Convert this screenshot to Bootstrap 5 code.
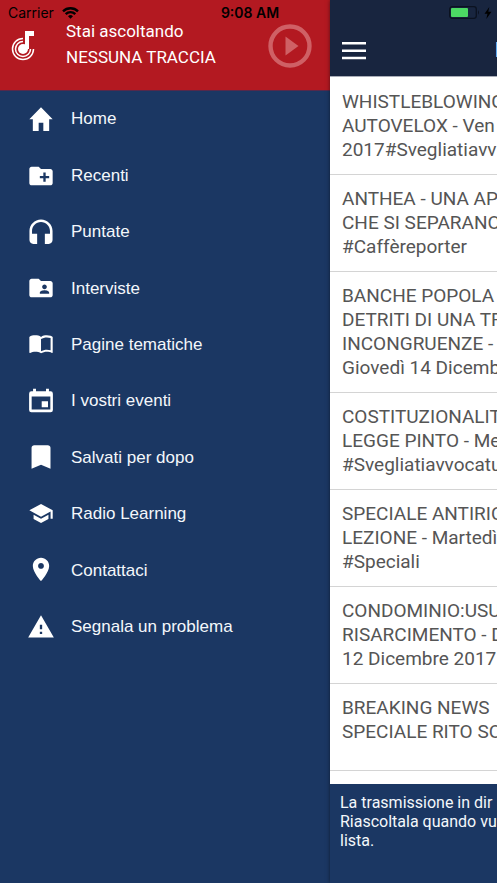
<!DOCTYPE html>
<html lang="it">
<head>
<meta charset="utf-8">
<meta name="viewport" content="width=device-width, initial-scale=1">
<title>Radio</title>
<link href="https://cdn.jsdelivr.net/npm/bootstrap@5.3.0/dist/css/bootstrap.min.css" rel="stylesheet">
<style>
body { font-family: Roboto, "Liberation Sans", sans-serif; background: #1b3763; }
.drawer { width: 330px; background: #1b3763; }
.now-playing { background: #b31921; height: 91px; padding: 18px 18px 0 11px; font-size: 17px; line-height: 26px; border-bottom: 1px solid #54294c; }
.track { margin-left: 30px; }
.brand-mark { margin-top: 11px; }
.play-btn { margin-top: 6px; color: #cf6065; }
.menu-list { height: 564px; font-family: "Liberation Sans", sans-serif; font-size: 17px; }
.menu-list a { padding-left: 27px; gap: 16px; color: #f4f7fb; }
.content-pane { min-width: 0; box-shadow: 0 0 4px rgba(0, 0, 0, .5); z-index: 1; }
.top-bar { background: #18253f; height: 77px; margin-bottom: 1px; padding: 38px 0 0 12px; gap: 129px; border-bottom: 1px solid #a9adb8; }
.top-title { font-size: 20px; line-height: 24px; font-weight: 500; }
.episodes a { padding: 12px; font-size: 19px; line-height: 24px; color: #555; border-bottom: 1px solid #d4d4d4; }
.episodes a.brief { min-height: 87px; }
.live-note { background: #1b3763; height: 99px; padding: 9px 10px; font-size: 16px; line-height: 19px; color: #f4f7fb; }
.status-bar { height: 25px; z-index: 2; padding: 0 5px 0 8px; font: 14px/25px Inter, "Liberation Sans", sans-serif; color: #000; }
.status-left, .status-right { flex: 1 1 0; }
</style>
</head>
<body>
<div class="d-flex min-vh-100 position-relative overflow-hidden">
  <div class="status-bar position-absolute top-0 start-0 w-100 d-flex align-items-center">
    <div class="status-left d-flex align-items-center gap-2"><span>Carrier</span>
      <svg width="17" height="12" viewBox="0 0 17 12" fill="none" stroke="#000" stroke-width="2.4" aria-hidden="true"><path d="M1 4.3a10.7 10.7 0 0 1 15 0M3.7 7.1a6.8 6.8 0 0 1 9.6 0"/><path d="M8.5 11.8 6 9.3a3.6 3.6 0 0 1 5 0z" fill="#000" stroke="none"/></svg>
    </div>
    <div class="fw-semibold">9:08 AM</div>
    <div class="status-right d-flex align-items-center justify-content-end gap-1">
      <svg width="31" height="13" viewBox="0 0 31 13" aria-hidden="true"><rect x=".7" y=".7" width="26.6" height="11.6" rx="2.5" fill="none" stroke="#0b1220" stroke-width="1.3"/><path d="M29 4.3q2 2.200 0 4.400z" fill="#0b1220"/><rect x="2" y="2" width="17" height="9" rx="1" fill="#4cd964"/></svg>
      <svg width="8" height="12" viewBox="0 0 8 12" aria-hidden="true"><path d="M5.300 0 .5 6.700h3L2.300 12l5.200-7.200H4.300z"/></svg>
    </div>
  </div>

  <aside class="drawer flex-shrink-0">
    <div class="now-playing d-flex align-items-start text-white">
      <svg class="brand-mark flex-shrink-0" width="25" height="33" viewBox="0 0 25 33" fill="none" stroke="#fff" stroke-width="1.500" aria-hidden="true"><circle cx="12" cy="20" r="5" fill="#fff" stroke="none"/><path d="M14 2h9v5h-5v13h-4z" fill="#fff" stroke="none"/><path d="M12 12.500a7.500 7.500 0 1 0 7.500 7.500M12 9.500A10.500 10.500 0 1 0 22.500 20"/></svg>
      <div class="track flex-grow-1"><div>Stai ascoltando</div><div>NESSUNA TRACCIA</div></div>
      <button type="button" class="play-btn btn p-0 border-0 lh-1" aria-label="Riproduci"><svg class="d-block" width="44" height="44" viewBox="0 0 44 44"><circle cx="22" cy="22" r="19.500" fill="none" stroke="currentColor" stroke-width="4.400"/><path d="M17.500 12.500v19l13-9.500z" fill="currentColor"/></svg></button>
    </div>
    <nav class="menu-list d-flex flex-column" aria-label="Menu">
      <a href="#" class="flex-fill d-flex align-items-center text-decoration-none"><svg width="28" height="28" viewBox="0 0 24 24" fill="#fff"><path d="M10 22.200v-7h4v7h5v-10h3L12 2 2 12.200h3v10z"/></svg>Home</a>
      <a href="#" class="flex-fill d-flex align-items-center text-decoration-none"><svg width="28" height="28" viewBox="0 0 24 24" fill="#fff"><path d="M20 6h-8l-2-2H4c-1.110 0-1.990.890-1.990 2L2 18c0 1.110.890 2 2 2h16c1.110 0 2-.890 2-2V8c0-1.110-.890-2-2-2zm-1 8h-3v3h-2v-3h-3v-2h3V9h2v3h3v2z"/></svg>Recenti</a>
      <a href="#" class="flex-fill d-flex align-items-center text-decoration-none"><svg width="28" height="28" viewBox="0 0 24 24" fill="#fff"><path d="M12 1c-4.970 0-9 4.030-9 9v7c0 1.660 1.340 3 3 3h3v-8H5v-2c0-3.870 3.130-7 7-7s7 3.130 7 7v2h-4v8h3c1.660 0 3-1.340 3-3v-7c0-4.970-4.030-9-9-9z" transform="translate(-1.200 0.200) scale(1.100)"/></svg>Puntate</a>
      <a href="#" class="flex-fill d-flex align-items-center text-decoration-none"><svg width="28" height="28" viewBox="0 0 24 24" fill="#fff"><path d="M20 6h-8l-2-2H4c-1.100 0-1.990.900-1.990 2L2 18c0 1.100.900 2 2 2h16c1.100 0 2-.900 2-2V8c0-1.100-.900-2-2-2zm-5 3c1.100 0 2 .900 2 2s-.900 2-2 2-2-.900-2-2 .900-2 2-2zm4 8h-8v-1c0-1.330 2.670-2 4-2s4 .670 4 2v1z"/></svg>Interviste</a>
      <a href="#" class="flex-fill d-flex align-items-center text-decoration-none"><svg width="28" height="28" viewBox="0 0 24 24" fill="#fff"><path d="M21 5c-1.110-.350-2.330-.500-3.500-.500-1.950 0-4.050.400-5.500 1.500-1.450-1.100-3.550-1.500-5.500-1.500S2.450 4.900 1 6v14.650c0 .250.250.500.500.500.100 0 .150-.050.250-.050C3.100 20.450 5.050 20 6.500 20c1.950 0 4.050.400 5.500 1.500 1.350-.850 3.800-1.500 5.500-1.500 1.650 0 3.350.300 4.750 1.050.100.050.150.050.250.050.250 0 .500-.250.500-.500V6c-.600-.450-1.250-.750-2-1zm0 13.500c-1.100-.350-2.300-.500-3.500-.500-1.700 0-4.150.650-5.500 1.500V8c1.350-.850 3.800-1.500 5.500-1.500 1.200 0 2.400.150 3.500.500v11.500z" transform="translate(1.100 -.4) scale(.91)"/></svg>Pagine tematiche</a>
      <a href="#" class="flex-fill d-flex align-items-center text-decoration-none"><svg width="28" height="28" viewBox="0 0 24 24" fill="#fff"><path fill-rule="evenodd" d="M5.200 1.400h2.500v2.300h8.600V1.400h2.500v2.300h1.400a2 2 0 0 1 2 2v14a2 2 0 0 1-2 2H3.800a2 2 0 0 1-2-2v-14a2 2 0 0 1 2-2h1.400zM4 8.200v11.100h16V8.200zM12.600 12.300H18v5.100h-5.400z"/></svg>I vostri eventi</a>
      <a href="#" class="flex-fill d-flex align-items-center text-decoration-none"><svg width="28" height="28" viewBox="0 0 24 24" fill="#fff"><path d="M17 3H7c-1.100 0-1.990.900-1.990 2L5 21l7-3 7 3V5c0-1.100-.900-2-2-2z" transform="translate(-1.900 -2.300) scale(1.160 1.120)"/></svg>Salvati per dopo</a>
      <a href="#" class="flex-fill d-flex align-items-center text-decoration-none"><svg width="28" height="28" viewBox="0 0 24 24" fill="#fff"><path d="M5 13.180v4L12 21l7-3.820v-4L12 17l-7-3.820zM12 3 1 9l11 6 9-4.910V17h2V9L12 3z" transform="translate(1.100 .6) scale(.91)"/></svg>Radio Learning</a>
      <a href="#" class="flex-fill d-flex align-items-center text-decoration-none"><svg width="28" height="28" viewBox="0 0 24 24" fill="#fff"><path d="M12 1.500c-3.870 0-7 3.130-7 7 0 5.250 7 13 7 13s7-7.750 7-13c0-3.870-3.130-7-7-7zm0 9.500c-1.380 0-2.500-1.120-2.500-2.500s1.120-2.500 2.500-2.500 2.500 1.120 2.500 2.500-1.120 2.500-2.500 2.500z"/></svg>Contattaci</a>
      <a href="#" class="flex-fill d-flex align-items-center text-decoration-none"><svg width="28" height="28" viewBox="0 0 24 24" fill="#fff"><path d="M1 21h22L12 2 1 21zm12-3h-2v-2h2v2zm0-4h-2v-4h2v4z"/></svg>Segnala un problema</a>
    </nav>
  </aside>

  <main class="content-pane flex-fill d-flex flex-column overflow-hidden bg-white text-nowrap">
    <header class="top-bar d-flex align-items-start text-white flex-shrink-0">
      <button type="button" class="btn p-0 border-0 lh-1 text-white" aria-label="Apri menu"><svg class="d-block" width="24" height="24" viewBox="0 0 24 24"><path d="M0 4h24v2.500H0zM0 11.500h24V14H0zM0 18.700h24v2.500H0z" fill="currentColor"/></svg></button>
      <div class="top-title">Radio</div>
    </header>
    <div class="episodes flex-grow-1 d-flex flex-column">
      <a href="#" class="text-decoration-none">WHISTLEBLOWING<br>AUTOVELOX - Ven<br>2017#Svegliatiavv</a>
      <a href="#" class="text-decoration-none">ANTHEA - UNA AP<br>CHE SI SEPARANO<br>#Caffèreporter</a>
      <a href="#" class="text-decoration-none">BANCHE POPOLA<br>DETRITI DI UNA TR<br>INCONGRUENZE -<br>Giovedì 14 Dicemb</a>
      <a href="#" class="text-decoration-none">COSTITUZIONALIT<br>LEGGE PINTO - Me<br>#Svegliatiavvocatu</a>
      <a href="#" class="text-decoration-none">SPECIALE ANTIRIC<br>LEZIONE - Martedì<br>#Speciali</a>
      <a href="#" class="text-decoration-none">CONDOMINIO:USU<br>RISARCIMENTO - D<br>12 Dicembre 2017</a>
      <a href="#" class="brief text-decoration-none">BREAKING NEWS<br>SPECIALE RITO SO</a>
    </div>
    <footer class="live-note">La trasmissione in dir<br>Riascoltala quando vu<br>lista.</footer>
  </main>
</div>
<script src="https://cdn.jsdelivr.net/npm/bootstrap@5.3.0/dist/js/bootstrap.bundle.min.js"></script>
</body>
</html>
